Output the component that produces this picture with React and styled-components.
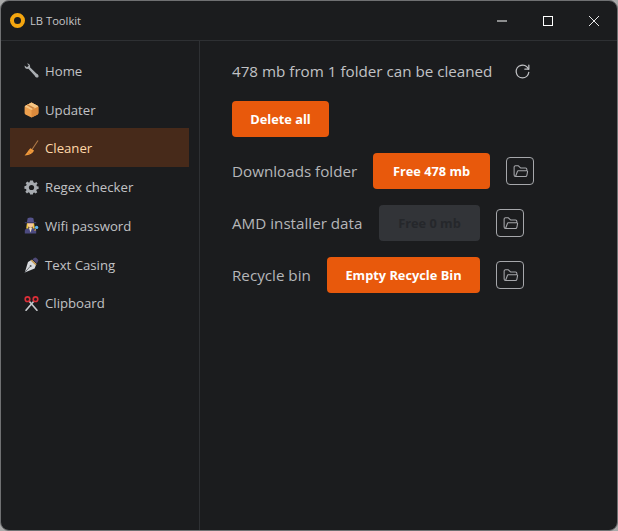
import React from 'react'
import styled, { createGlobalStyle } from 'styled-components'

const GlobalStyle = createGlobalStyle`
    html, body {
        margin: 0;
        padding: 0;
        background: #a9a9a9;
    }
    * {
        box-sizing: border-box;
    }
`

const Window = styled.div`
    width: 618px;
    height: 531px;
    border: 1px solid #6f7072;
    border-radius: 9px;
    background: #1b1c1e;
    color: #c1c2c5;
    font-family: "Open Sans", "Noto Sans", sans-serif;
    display: flex;
    flex-direction: column;
    overflow: hidden;
`

const TitleBar = styled.header`
    height: 40px;
    flex: none;
    display: flex;
    align-items: center;
    padding-left: 9px;
    border-bottom: 1px solid #2e3033;
`

const Logo = styled.span`
    width: 15px;
    height: 15px;
    border: 4px solid #f5a60f;
    border-radius: 50%;
`

const AppName = styled.span`
    margin-left: 5px;
    font-size: 11.2px;
    color: #c4c5c7;
`

const Controls = styled.div`
    margin-left: auto;
    display: flex;
    align-items: center;
`

const WinButton = styled.span`
    width: 46px;
    height: 39px;
    display: flex;
    align-items: center;
    justify-content: center;
    color: #fff;
`

const Body = styled.div`
    flex: 1;
    display: flex;
    min-height: 0;
`

const Sidebar = styled.nav`
    width: 199px;
    flex: none;
    padding: 9.8px 10px 0 9px;
    border-right: 1px solid #2e3033;
    display: flex;
    flex-direction: column;
`

const NavItem = styled.div`
    height: 38.75px;
    display: flex;
    align-items: center;
    gap: 6px;
    padding: 1.2px 0 0 14px;
    font-size: 13.2px;
    color: ${p => (p.$active ? '#ffd8a8' : '#c1c2c5')};
    background: ${p => (p.$active ? '#472a1a' : 'transparent')};
`

const IconSlot = styled.span`
    width: 15px;
    height: 17px;
    display: flex;
    align-items: center;
    justify-content: center;
`

const Main = styled.main`
    flex: 1;
    padding: 20px 32px 0;
    display: flex;
    flex-direction: column;
    align-items: flex-start;
    gap: 16px;
`

const Heading = styled.div`
    height: 24px;
    margin-top: -2px;
    margin-bottom: 2px;
    display: flex;
    align-items: center;
    gap: 21px;
`

const HeadingText = styled.span`
    font-size: 15.2px;
    color: #c1c2c5;
`

const Row = styled.div`
    display: flex;
    align-items: center;
    gap: 16px;
`

const Label = styled.span`
    width: ${p => p.$width}px;
    white-space: nowrap;
    font-size: 15.2px;
    color: #b5b6b9;
`

const Button = styled.button`
    width: ${p => p.$width}px;
    height: 36px;
    padding: 0;
    border: 0;
    border-radius: 4px;
    font-family: inherit;
    font-size: 12.8px;
    font-weight: 700;
    color: ${p => (p.disabled ? '#25272b' : '#ffffff')};
    background: ${p => (p.disabled ? '#323438' : '#e8590c')};
`

const FolderButton = styled.span`
    width: 28px;
    height: 28px;
    border: 1px solid #a6a7ab;
    border-radius: 4px;
    display: flex;
    align-items: center;
    justify-content: center;
    color: #a6a7ab;
`

const FolderIcon = () => (
    <svg width="17" height="17" viewBox="0 0 24 24" fill="none" stroke="currentColor" strokeWidth="1.5" strokeLinecap="round" strokeLinejoin="round">
        <path d="M5 19l2.757 -7.351a1 1 0 0 1 .936 -.649h12.307a1 1 0 0 1 .986 1.164l-.996 5.211a2 2 0 0 1 -1.964 1.625h-14.026a2 2 0 0 1 -2 -2v-11a2 2 0 0 1 2 -2h4l3 3h7a2 2 0 0 1 2 2v2" />
    </svg>
)

const ReloadIcon = () => (
    <svg width="19" height="19" viewBox="0 0 24 24" fill="none" stroke="#c1c2c5" strokeWidth="1.6" strokeLinecap="round" strokeLinejoin="round">
        <path d="M19.933 13.041a8 8 0 1 1 -9.925 -8.788c3.899 -1 7.935 1.007 9.425 4.747" />
        <path d="M20 4v5h-5" />
    </svg>
)

// the emoji in the nav, no emoji font in here so they are drawn
const Wrench = () => (
    <svg width="15" height="15" viewBox="0 0 15 15">
        <path d="M.6 2.6C.4 5 2.4 6.4 4.4 5.8L10.6 12.4C11 14 13 15.2 14.2 14.2 15.2 13 14 11.2 12.4 10.6L6 4.2C6.6 2 5 .2 3 .4L4.8 2.6 3 4.2Z" fill="#a9adb1" />
    </svg>
)

const Box = () => (
    <svg width="15" height="16" viewBox="0 0 15 16">
        <path d="M7.5 .5 13.2 3.4C14 3.8 14.4 4.4 14.4 5.2V11C14.4 11.8 14 12.4 13.2 12.8L7.5 15.6 1.8 12.8C1 12.4.6 11.8.6 11V5.2C.6 4.4 1 3.8 1.8 3.4Z" fill="#eea04e" />
        <path d="M7.5 .5 13.2 3.4C14 3.8 14.2 4.2 14.3 4.6L7.5 8 .7 4.6C.8 4.2 1 3.8 1.8 3.4Z" fill="#f6c583" />
        <path d="M7.5 8V15.6L13.2 12.8C14 12.4 14.4 11.8 14.4 11V4.8Z" fill="#dc8a3c" />
        <path d="M4 2.4 10.8 6 9 7 2.8 3.2Z" fill="#c9803e" />
    </svg>
)

const Broom = () => (
    <svg width="15" height="17" viewBox="0 0 15 17">
        <path d="M14 .5 8 9.5" stroke="#b07a48" strokeWidth="1.1" fill="none" />
        <path d="M6.4 8.2 10 10.6C8.8 13.4 5 15.6 .6 15.4 2.8 13.6 4 10.4 6.4 8.2Z" fill="#f09a3c" />
        <path d="M5.4 10.4 7.6 12M3.8 13 6 14" stroke="#c9742a" strokeWidth=".6" />
    </svg>
)

const Gear = () => (
    <svg width="15" height="15" viewBox="0 0 15 15">
        <path d="M6 .5H9L9.4 2.3 10.8 2.9 12.4 1.9 13.6 3.6 12.4 5 12.9 6.2 14.6 6.6V8.9L12.9 9.3 12.3 10.6 13.3 12.2 11.6 13.6 10.2 12.4 9.2 12.9 8.9 14.6H6.1L5.7 12.9 4.5 12.3 3 13.4 1.3 11.7 2.5 10.2 2 9.1.4 8.8V6.2L2.1 5.8 2.7 4.6 1.6 3.2 3.3 1.6 4.7 2.6 5.7 2.2Z" fill="#a7abb0" />
        <circle cx="7.5" cy="7.5" r="2.6" fill="#1b1c1e" />
    </svg>
)

const Detective = () => (
    <svg width="15" height="17" viewBox="0 0 15 17">
        <path d="M.8 16.5V13.8C.8 12 3 11 6.5 11S12.2 12 12.2 13.8V16.5Z" fill="#4c4a80" />
        <path d="M5 11H8L6.5 15.5Z" fill="#eee3c4" />
        <path d="M3 5.5H10L10.8 11.4 8.6 11.4 8.6 6.8H4.4V11.4L2.2 11.4Z" fill="#f0c848" />
        <path d="M4 6H9V8.6C9 10 7.8 11 6.5 11S4 10 4 8.6Z" fill="#f3c79c" />
        <path d="M.8 5H12.2V6.2H.8Z" fill="#3b3a66" />
        <path d="M3 5 3.6 1.2C5 .4 8 .4 9.4 1.2L10 5Z" fill="#55538c" />
        <circle cx="12.6" cy="10.4" r="1.7" fill="#5bb5f0" />
        <path d="M11.6 12 10.8 14" stroke="#d8a43c" strokeWidth="1" />
    </svg>
)

const Pen = () => (
    <svg width="15" height="16" viewBox="0 0 15 16">
        <path d="M8.4 2.2 11 .4C12 .2 14 2.2 14.4 3.4L12.8 6.4Z" fill="#4f4a78" />
        <path d="M7.8 2.8 12.4 7 10.6 11.6 .8 15.4 4 5Z" fill="#d9dbdf" />
        <path d="M7.8 2.8 12.4 7 11.8 8.4 6.6 3.6Z" fill="#c79a4e" />
        <path d="M.8 15.4 6 9.6" stroke="#55585c" strokeWidth=".8" />
        <circle cx="6.6" cy="9" r="1" fill="#55585c" />
    </svg>
)

const Scissors = () => (
    <svg width="15" height="15" viewBox="0 0 15 15" fill="none">
        <path d="M5 5 13.4 14.8M10 5 1.6 14.8" stroke="#c4c8cc" strokeWidth="1.6" />
        <circle cx="3.5" cy="3.2" r="2.3" stroke="#dc2f38" strokeWidth="1.6" />
        <circle cx="11.5" cy="3.2" r="2.3" stroke="#dc2f38" strokeWidth="1.6" />
    </svg>
)

const navItems = [
    { label: 'Home', icon: <Wrench /> },
    { label: 'Updater', icon: <Box /> },
    { label: 'Cleaner', icon: <Broom />, active: true },
    { label: 'Regex checker', icon: <Gear /> },
    { label: 'Wifi password', icon: <Detective /> },
    { label: 'Text Casing', icon: <Pen /> },
    { label: 'Clipboard', icon: <Scissors /> },
]

export default function App() {
    return (
        <>
            <GlobalStyle />
            <Window>
                <TitleBar>
                    <Logo />
                    <AppName>LB Toolkit</AppName>
                    <Controls>
                        <WinButton>
                            <svg width="10" height="10" viewBox="0 0 10 10"><path d="M0 5h10" stroke="currentColor" /></svg>
                        </WinButton>
                        <WinButton>
                            <svg width="10" height="10" viewBox="0 0 10 10"><rect x=".5" y=".5" width="9" height="9" fill="none" stroke="currentColor" /></svg>
                        </WinButton>
                        <WinButton>
                            <svg width="10" height="10" viewBox="0 0 10 10"><path d="M0 0l10 10M10 0L0 10" stroke="currentColor" strokeWidth=".9" /></svg>
                        </WinButton>
                    </Controls>
                </TitleBar>
                <Body>
                    <Sidebar>
                        {navItems.map(item => (
                            <NavItem key={item.label} $active={item.active}>
                                <IconSlot>{item.icon}</IconSlot>
                                {item.label}
                            </NavItem>
                        ))}
                    </Sidebar>
                    <Main>
                        <Heading>
                            <HeadingText>478 mb from 1 folder can be cleaned</HeadingText>
                            <ReloadIcon />
                        </Heading>
                        <Button $width={97}>Delete all</Button>
                        <Row>
                            <Label $width={125}>Downloads folder</Label>
                            <Button $width={117}>Free 478 mb</Button>
                            <FolderButton><FolderIcon /></FolderButton>
                        </Row>
                        <Row>
                            <Label $width={131}>AMD installer data</Label>
                            <Button $width={101} disabled>Free 0 mb</Button>
                            <FolderButton><FolderIcon /></FolderButton>
                        </Row>
                        <Row>
                            <Label $width={79}>Recycle bin</Label>
                            <Button $width={153}>Empty Recycle Bin</Button>
                            <FolderButton><FolderIcon /></FolderButton>
                        </Row>
                    </Main>
                </Body>
            </Window>
        </>
    )
}
